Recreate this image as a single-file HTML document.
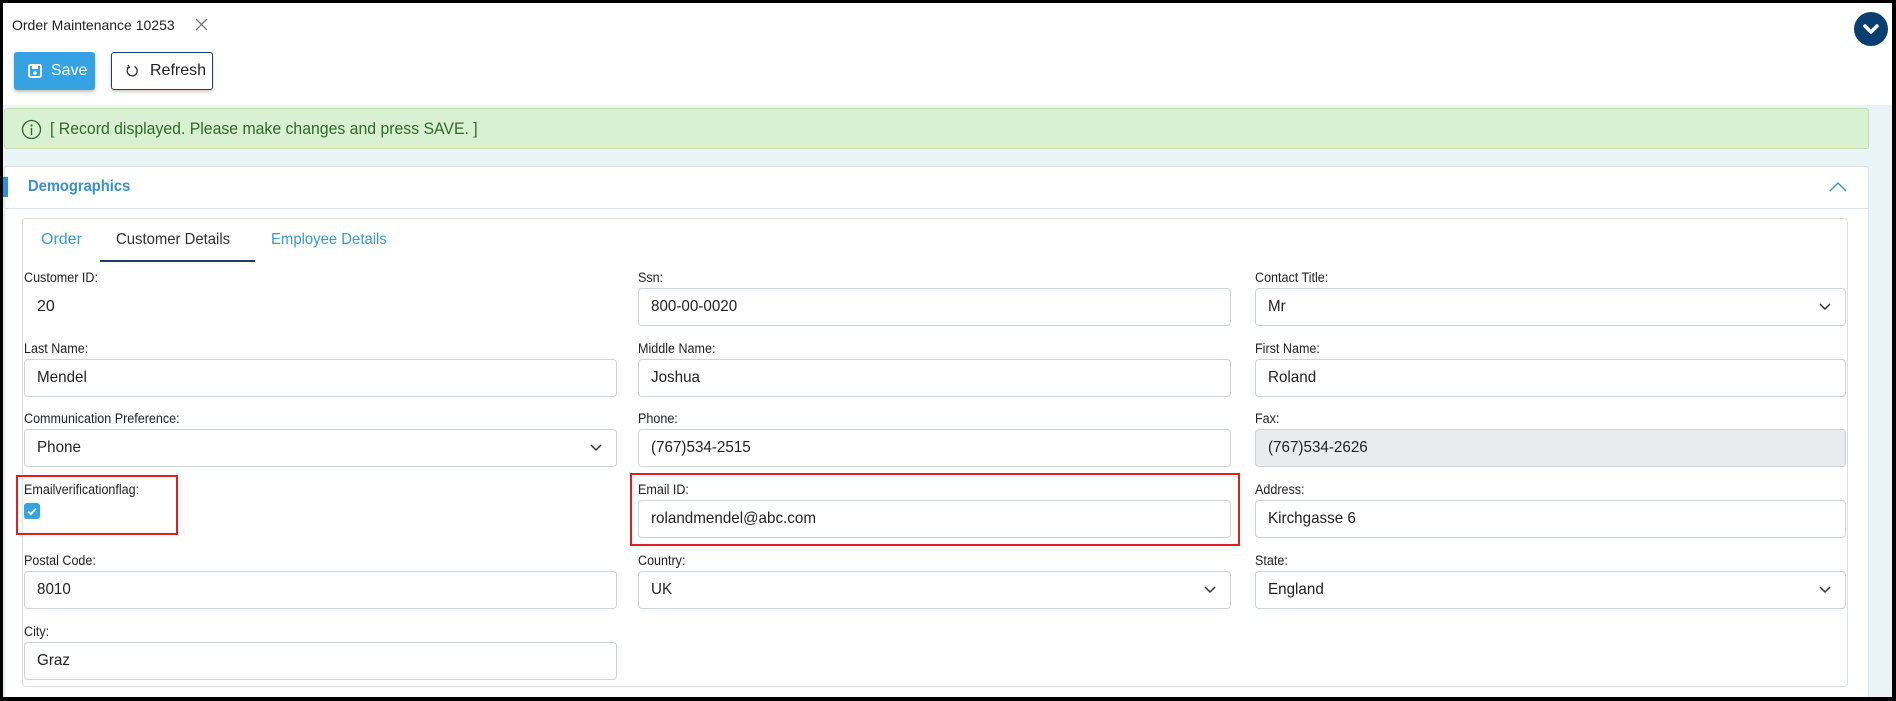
<!DOCTYPE html>
<html><head><meta charset="utf-8"><style>
*{box-sizing:border-box;margin:0;padding:0}
body{width:1896px;height:701px;overflow:hidden;background:#000;font-family:"Liberation Sans",sans-serif;position:relative}
#app{position:absolute;left:3px;top:3px;width:1889px;height:694px;background:#fff;overflow:hidden}
.a{position:absolute}
.lbl{position:absolute;font-size:13.5px;color:#222;transform:scaleX(.93);transform-origin:left}
.inp{position:absolute;height:38px;border:1px solid #ced4da;border-radius:4px;background:#fff;font-size:16px;color:#222;padding-left:12px;line-height:36px}
.inp span{display:inline-block;transform:scaleX(.95);transform-origin:left}
.sel svg{position:absolute;right:14px;top:14px}
.red{position:absolute;border:2.5px solid #e01e26}
</style></head><body><div id="app">
<div class="a" style="left:9px;top:14px;font-size:14px;color:#222">Order Maintenance 10253</div>
<svg class="a" style="left:192px;top:15px" width="13" height="13"><path d="M1 1L12 12M12 1L1 12" stroke="#777" stroke-width="1.3"/></svg>
<div class="a" style="left:1851px;top:9px;width:34px;height:34px;border-radius:50%;background:#0a3d70"></div>
<svg class="a" style="left:1858px;top:16px" width="20" height="20"><path d="M4 7L10 13L16 7" stroke="#fff" stroke-width="3.5" fill="none" stroke-linecap="round" stroke-linejoin="round"/></svg>
<div class="a" style="left:11px;top:49px;width:81px;height:38px;background:#35a3e3;border-radius:3px;box-shadow:0 2px 3px rgba(0,0,0,.25);color:#fff;font-size:16px;line-height:38px;padding-left:37px">Save</div>
<svg class="a" style="left:25px;top:61px" width="14" height="14"><rect x="1" y="1" width="12" height="12" rx="1.5" fill="none" stroke="#fff" stroke-width="2"/><rect x="4" y="1" width="6" height="4" fill="#fff"/><circle cx="7" cy="9" r="1.8" fill="#fff"/></svg>
<div class="a" style="left:108px;top:49px;width:102px;height:38px;border:1.5px solid #1d3f66;border-radius:3px;box-shadow:0 2px 3px rgba(0,0,0,.2);color:#222;font-size:16px;line-height:35px;padding-left:38px">Refresh</div>
<svg class="a" style="left:122px;top:61px" width="14" height="14"><path d="M9.5 2.5A5 5 0 1 1 4 3" stroke="#333" stroke-width="1.3" fill="none"/><path d="M3 1L4.5 3.5L1.8 4" stroke="#333" stroke-width="1.2" fill="none"/></svg>
<div class="a" style="left:0;top:102px;width:1889px;height:600px;background:#eaf3f7"></div>
<div class="a" style="left:1px;top:105px;width:1865px;height:41px;background:#d9f0d3;border:1px solid #bfe2b5;border-radius:3px"></div>
<svg class="a" style="left:18px;top:116px" width="21" height="21"><circle cx="10.5" cy="10.5" r="9" fill="none" stroke="#2e6b2a" stroke-width="1.3"/><circle cx="10.5" cy="6.5" r="1.1" fill="#2e6b2a"/><path d="M10.5 9V16" stroke="#2e6b2a" stroke-width="1.4"/></svg>
<div class="a" style="left:47px;top:116px;font-size:17px;color:#2e6b2a;transform:scaleX(.93);transform-origin:left">[ Record displayed. Please make changes and press SAVE. ]</div>
<div class="a" style="left:1px;top:163px;width:1865px;height:540px;background:#fff;border:1px solid #dde2e6;border-radius:3px"></div>
<div class="a" style="left:0;top:174px;width:5px;height:20px;background:#2d8fd5"></div>
<div class="a" style="left:25px;top:175px;font-size:16px;font-weight:bold;color:#3a8fd0;transform:scaleX(.92);transform-origin:left">Demographics</div>
<svg class="a" style="left:1825px;top:178px" width="20" height="12"><path d="M2 10L10 2L18 10" stroke="#3a9ad9" stroke-width="1.5" fill="none"/></svg>
<div class="a" style="left:1px;top:205px;width:1865px;height:1px;background:#dde2e6"></div>
<div class="a" style="left:19px;top:215px;width:1826px;height:469px;border:1px solid #dcdfe3;border-radius:4px;background:#fff"></div>
<div class="a" style="left:38px;top:228px;font-size:16px;color:#3a9ad9">Order</div>
<div class="a" style="left:113px;top:228px;font-size:16px;color:#333;transform:scaleX(.93);transform-origin:left">Customer Details</div>
<div class="a" style="left:268px;top:228px;font-size:16px;color:#3a9ad9;transform:scaleX(.93);transform-origin:left">Employee Details</div>
<div class="a" style="left:97px;top:257px;width:155px;height:2px;background:#1d3f66"></div>

<div class="lbl" style="left:21px;top:267px">Customer ID:</div>
<div class="a" style="left:34px;top:295px;font-size:16px;color:#222">20</div>
<div class="lbl" style="left:635px;top:267px">Ssn:</div>
<div class="inp" style="left:635px;top:285px;width:593px"><span>800-00-0020</span></div>
<div class="lbl" style="left:1252px;top:267px">Contact Title:</div>
<div class="inp sel" style="left:1252px;top:285px;width:591px"><span>Mr</span><svg width="12" height="8"><path d="M1 1L6 6L11 1" stroke="#333" stroke-width="1.5" fill="none"/></svg></div>

<div class="lbl" style="left:21px;top:338px">Last Name:</div>
<div class="inp" style="left:21px;top:356px;width:593px"><span>Mendel</span></div>
<div class="lbl" style="left:635px;top:338px">Middle Name:</div>
<div class="inp" style="left:635px;top:356px;width:593px"><span>Joshua</span></div>
<div class="lbl" style="left:1252px;top:338px">First Name:</div>
<div class="inp" style="left:1252px;top:356px;width:591px"><span>Roland</span></div>

<div class="lbl" style="left:21px;top:408px">Communication Preference:</div>
<div class="inp sel" style="left:21px;top:426px;width:593px"><span>Phone</span><svg width="12" height="8"><path d="M1 1L6 6L11 1" stroke="#333" stroke-width="1.5" fill="none"/></svg></div>
<div class="lbl" style="left:635px;top:408px">Phone:</div>
<div class="inp" style="left:635px;top:426px;width:593px"><span>(767)534-2515</span></div>
<div class="lbl" style="left:1252px;top:408px">Fax:</div>
<div class="inp" style="left:1252px;top:426px;width:591px;background:#e9ecef"><span>(767)534-2626</span></div>

<div class="lbl" style="left:21px;top:479px">Emailverificationflag:</div>
<div class="a" style="left:21px;top:500px;width:16px;height:16px;border-radius:3px;background:#35a3e3"></div>
<svg class="a" style="left:21px;top:500px" width="16" height="16"><path d="M4 8.5L7 11L12 5.5" stroke="#fff" stroke-width="1.8" fill="none"/></svg>
<div class="red" style="left:13px;top:472px;width:162px;height:60px"></div>
<div class="lbl" style="left:635px;top:479px">Email ID:</div>
<div class="inp" style="left:635px;top:497px;width:593px"><span>rolandmendel@abc.com</span></div>
<div class="red" style="left:627px;top:470px;width:610px;height:73px"></div>
<div class="lbl" style="left:1252px;top:479px">Address:</div>
<div class="inp" style="left:1252px;top:497px;width:591px"><span>Kirchgasse 6</span></div>

<div class="lbl" style="left:21px;top:550px">Postal Code:</div>
<div class="inp" style="left:21px;top:568px;width:593px"><span>8010</span></div>
<div class="lbl" style="left:635px;top:550px">Country:</div>
<div class="inp sel" style="left:635px;top:568px;width:593px"><span>UK</span><svg width="12" height="8"><path d="M1 1L6 6L11 1" stroke="#333" stroke-width="1.5" fill="none"/></svg></div>
<div class="lbl" style="left:1252px;top:550px">State:</div>
<div class="inp sel" style="left:1252px;top:568px;width:591px"><span>England</span><svg width="12" height="8"><path d="M1 1L6 6L11 1" stroke="#333" stroke-width="1.5" fill="none"/></svg></div>

<div class="lbl" style="left:21px;top:621px">City:</div>
<div class="inp" style="left:21px;top:639px;width:593px"><span>Graz</span></div>
</div></body></html>
